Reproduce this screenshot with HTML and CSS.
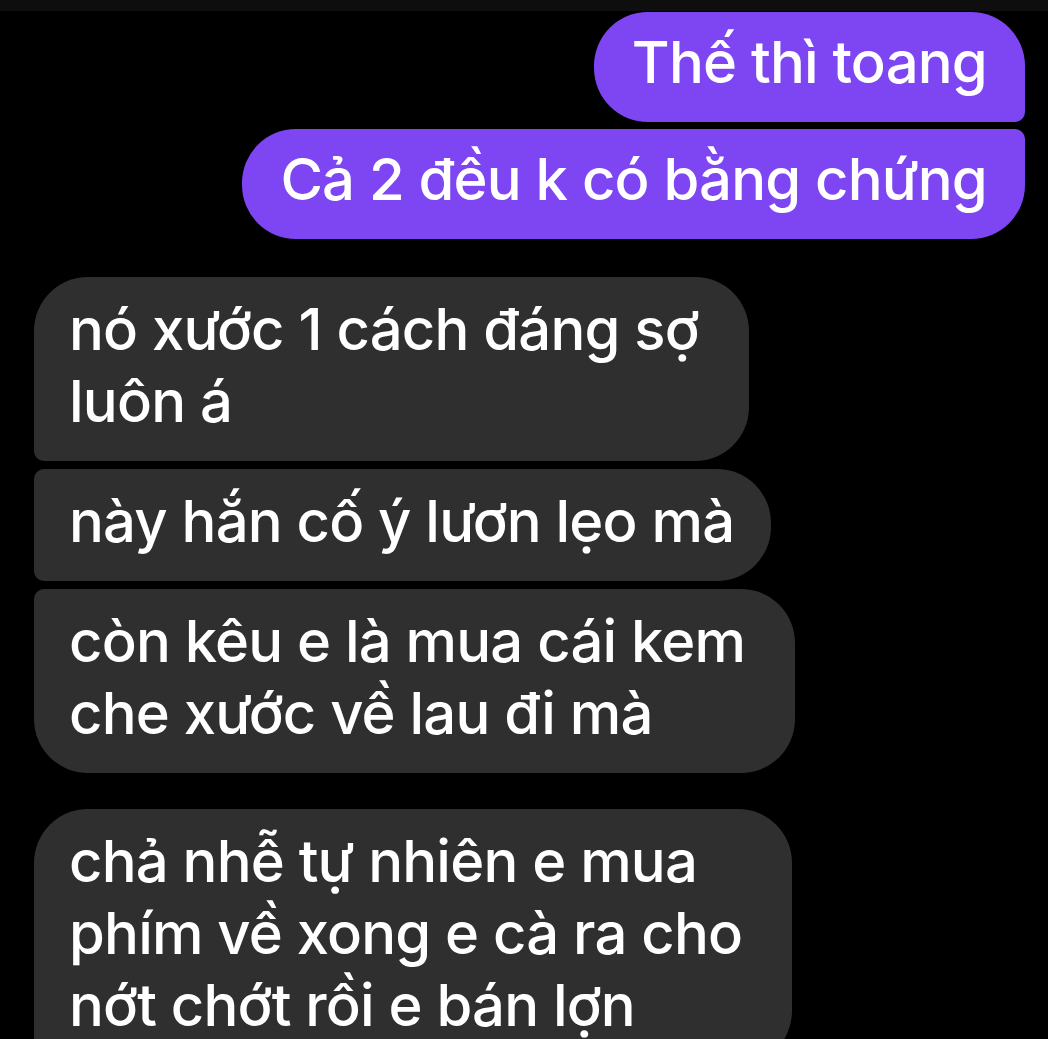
FILE: index.html
```html
<!DOCTYPE html>
<html lang="vi">
<head>
<meta charset="utf-8">
<title>Chat</title>
<link rel="stylesheet" href="styles.css">
</head>
<body>
<div class="topbar"></div>
<main class="thread">
  <section class="group out">
    <div class="msg first">Thế thì toang</div>
    <div class="msg last">Cả 2 đều k có bằng chứng</div>
  </section>
  <section class="group in">
    <div class="msg first wrap">nó xước 1 cách đáng sợ<br>luôn á</div>
    <div class="msg mid">này hắn cố ý lươn lẹo mà</div>
    <div class="msg last wrap">còn kêu e là mua cái kem<br>che xước về lau đi mà</div>
  </section>
  <section class="group in">
    <div class="msg first wrap">chả nhễ tự nhiên e mua<br>phím về xong e cà ra cho<br>nớt chớt rồi e bán lợn</div>
  </section>
</main>
</body>
</html>
```
FILE: styles.css
```css
html, body {
  margin: 0;
  padding: 0;
  background: #000;
  width: 1048px;
  height: 1039px;
  overflow: hidden;
}

body {
  font-family: "Inter", "Liberation Sans", Arial, sans-serif;
  color: #fff;
}

.topbar {
  height: 11px;
  background: #0e0e0e;
}

.thread {
  display: flex;
  flex-direction: column;
  padding-top: 1px;
}

.group {
  display: flex;
  flex-direction: column;
}

.group.out {
  align-items: flex-end;
  padding-right: 23px;
  gap: 7px;
  margin-bottom: 38px;
}

.group.in {
  align-items: flex-start;
  padding-left: 34px;
  gap: 8px;
  margin-bottom: 36px;
}

.msg {
  font-size: 58px;
  font-weight: 550;
  line-height: 72px;
  letter-spacing: -0.8px;
  white-space: nowrap;
  border-radius: 54px;
}

.out .msg {
  background: #7e46f2;
  padding: 14px 38px 24px 38px;
}

.in .msg {
  background: #2f2f2f;
  padding: 16px 37px 24px 35px;
}

.in .msg.wrap {
  padding-right: 50px;
}

.out .first { border-bottom-right-radius: 10px; }
.out .last { border-top-right-radius: 10px; }

.in .first { border-bottom-left-radius: 10px; }
.in .mid { border-top-left-radius: 10px; border-bottom-left-radius: 10px; }
.in .last { border-top-left-radius: 10px; }
```
